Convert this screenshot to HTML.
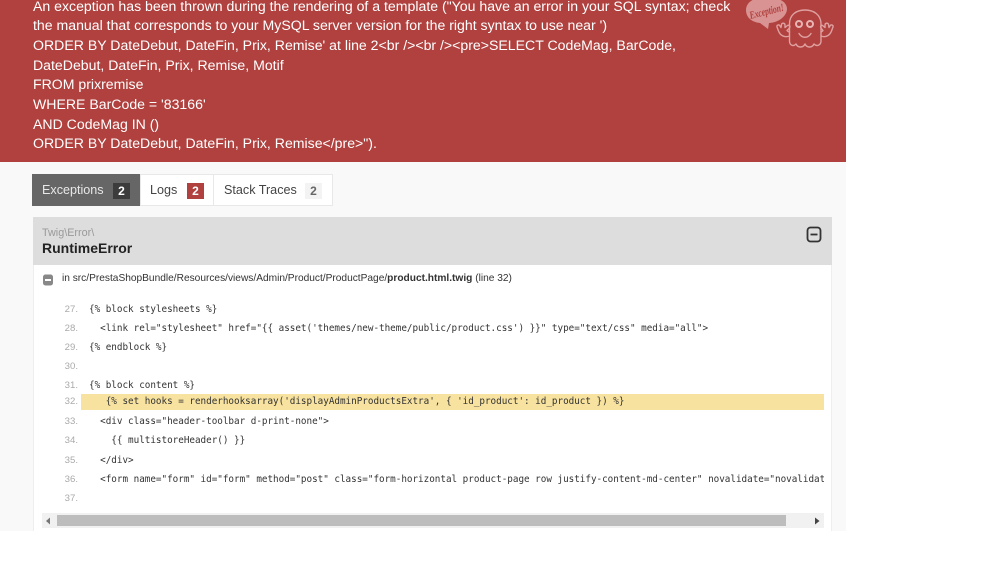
<!DOCTYPE html>
<html><head><meta charset="utf-8"><style>
html,body{margin:0;padding:0;width:1000px;height:563px;overflow:hidden;background:#fff;font-family:"Liberation Sans",sans-serif}
.a{position:absolute;white-space:pre}
#bg{left:0;top:0;width:846px;height:531px;background:#f9f9f9}
#hdr{left:0;top:0;width:846px;height:162px;background:#b0413e}
.m{left:33px;color:#fff;font-size:14.1px;line-height:20px;height:20px}
.tab{top:174px;height:32px;line-height:31px;font-size:12.6px;background:#fff;color:#444;box-sizing:border-box;border:1px solid #e8e8e8}
.b{position:absolute;top:183px;width:17px;height:16px;line-height:16px;text-align:center;font-size:12px;font-weight:bold}
.n{left:50px;width:28px;text-align:right;line-height:19px;color:#aaa;font-family:"Liberation Sans",sans-serif;font-size:9.6px}
.c{left:89px;font:9.3px/19px "DejaVu Sans Mono",monospace;color:#333;width:735px;overflow:hidden;letter-spacing:-.02px}
</style></head><body>
<div class="a" id="bg"></div>
<div class="a" id="hdr"></div>
<div class="a m" style="top:-4px">An exception has been thrown during the rendering of a template ("You have an error in your SQL syntax; check</div>
<div class="a m" style="top:15px">the manual that corresponds to your MySQL server version for the right syntax to use near ')</div>
<div class="a m" style="top:35px">ORDER BY DateDebut, DateFin, Prix, Remise' at line 2&lt;br /&gt;&lt;br /&gt;&lt;pre&gt;SELECT CodeMag, BarCode,</div>
<div class="a m" style="top:55px">DateDebut, DateFin, Prix, Remise, Motif</div>
<div class="a m" style="top:74px">FROM prixremise</div>
<div class="a m" style="top:94px">WHERE BarCode = '83166'</div>
<div class="a m" style="top:114px">AND CodeMag IN ()</div>
<div class="a m" style="top:133px">ORDER BY DateDebut, DateFin, Prix, Remise&lt;/pre&gt;").</div>

<svg class="a" style="left:745px;top:0" width="95" height="50" viewBox="0 0 95 50">
<path d="M1 10C1 3 8-3 21-3S42 2 42 9 33 23 24 23L23 29 15 23C6 22 1 17 1 10Z" fill="#d99393"/>
<text x="4" y="15" font-family="Liberation Serif,serif" font-style="italic" font-weight="bold" font-size="11" textLength="35" lengthAdjust="spacingAndGlyphs" fill="#b0413e" transform="rotate(-14 21 11)">Exception!</text>
<g fill="none" stroke="#dfa0a0" stroke-width="1.400" stroke-linecap="round" stroke-linejoin="round">
<path d="M44.500 41V24C44.500 15 51 10 60 10 69 10 76 15 76 24V41C76 45 72 47 69 44 67 48 62 48 60 44 58 48 53 48 51 44 48 47 44.500 45 44.500 41Z"/>
<path d="M44.500 36C39 38 35 35 33.500 31L32 27C31.500 25 34 24 35 26L36 27.500 36.500 24.500C37 22.500 40 23 40 25L40 27.500 42.500 25.500C44.500 24.500 45.500 26.500 44.500 28L42 30.500C43 31.500 44 32 44.500 32"/>
<path d="M76 36C81 38 85 35 86.500 31L88 27C88.500 25 86 24 85 26L84 27.500 83.500 24.500C83 22.500 80 23 80 25L80 27.500 77.500 25.500C76 24.500 75 26.500 76 28L78 30.500C77 31.500 76.500 32 76 32"/>
<path d="M54 33.500C57 38.500 63 38.500 66 33.500"/>
</g>
<circle cx="54" cy="24" r="3" fill="none" stroke="#e8b4b4" stroke-width="2"/><circle cx="65" cy="24" r="3" fill="none" stroke="#e8b4b4" stroke-width="2"/>
</svg>

<div class="a tab" style="left:32px;width:108px;background:#666;color:#e8e8e8;border-color:#666;padding-left:9px">Exceptions</div>
<div class="a b" style="left:113px;background:#3c3c3c;color:#fff">2</div>
<div class="a tab" style="left:140px;width:74px;padding-left:9px">Logs</div>
<div class="a b" style="left:187px;background:#b0413e;color:#fff">2</div>
<div class="a tab" style="left:213px;width:120px;padding-left:10px">Stack Traces</div>
<div class="a b" style="left:305px;background:#f3f3f3;color:#666">2</div>

<div class="a" style="left:33px;top:217px;width:799px;height:314px;background:#fff;box-sizing:border-box;border-left:1px solid #eee;border-right:1px solid #eee"></div>
<div class="a" style="left:33px;top:217px;width:799px;height:48px;background:#ddd"></div>
<div class="a" style="left:42px;top:226px;font-size:10.8px;line-height:14px;color:#999">Twig\Error\</div>
<div class="a" style="left:42px;top:239px;font-size:14px;line-height:18px;font-weight:bold;color:#222">RuntimeError</div>
<svg class="a" style="left:806px;top:226px" width="17" height="17"><rect x="1.500" y="1.500" width="13" height="14" rx="3" fill="none" stroke="#333" stroke-width="1.800"/><path d="M4.500 8.500H11.500" stroke="#333" stroke-width="1.800"/></svg>
<svg class="a" style="left:42px;top:274px" width="12" height="12"><rect x="1" y="0.500" width="10" height="11" rx="2.500" fill="#888"/><rect x="3" y="5" width="6" height="2" fill="#fff"/></svg>
<div class="a" style="left:62px;top:272px;font-size:10.170px;line-height:14px;color:#333">in src/PrestaShopBundle/Resources/views/Admin/Product/ProductPage/<b>product.html.twig</b> (line 32)</div>

<div class="a" style="left:81px;top:394px;width:743px;height:16px;background:#f7e29f"></div>
<div class="a n" style="top:300px">27.</div><div class="a c" style="top:300px">{% block stylesheets %}</div>
<div class="a n" style="top:319px">28.</div><div class="a c" style="top:319px">  &lt;link rel="stylesheet" href="{{ asset('themes/new-theme/public/product.css') }}" type="text/css" media="all"&gt;</div>
<div class="a n" style="top:338px">29.</div><div class="a c" style="top:338px">{% endblock %}</div>
<div class="a n" style="top:357px">30.</div>
<div class="a n" style="top:376px">31.</div><div class="a c" style="top:376px">{% block content %}</div>
<div class="a n" style="top:392px">32.</div><div class="a c" style="top:392px">   {% set hooks = renderhooksarray('displayAdminProductsExtra', { 'id_product': id_product }) %}</div>
<div class="a n" style="top:412px">33.</div><div class="a c" style="top:412px">  &lt;div class="header-toolbar d-print-none"&gt;</div>
<div class="a n" style="top:431px">34.</div><div class="a c" style="top:431px">    {{ multistoreHeader() }}</div>
<div class="a n" style="top:451px">35.</div><div class="a c" style="top:451px">  &lt;/div&gt;</div>
<div class="a n" style="top:470px">36.</div><div class="a c" style="top:470px">  &lt;form name="form" id="form" method="post" class="form-horizontal product-page row justify-content-md-center" novalidate="novalidate"&gt;</div>
<div class="a n" style="top:489px">37.</div>

<div class="a" style="left:42px;top:513px;width:782px;height:15px;background:#f1f1f1"></div>
<div class="a" style="left:57px;top:515px;width:729px;height:11px;background:#bdbdbd"></div>
<svg class="a" style="left:44px;top:516px" width="10" height="10"><path d="M6 1.500V8.500L2 5Z" fill="#777"/></svg>
<svg class="a" style="left:813px;top:516px" width="10" height="10"><path d="M2 1.500V8.500L6.500 5Z" fill="#444"/></svg>
</body></html>
